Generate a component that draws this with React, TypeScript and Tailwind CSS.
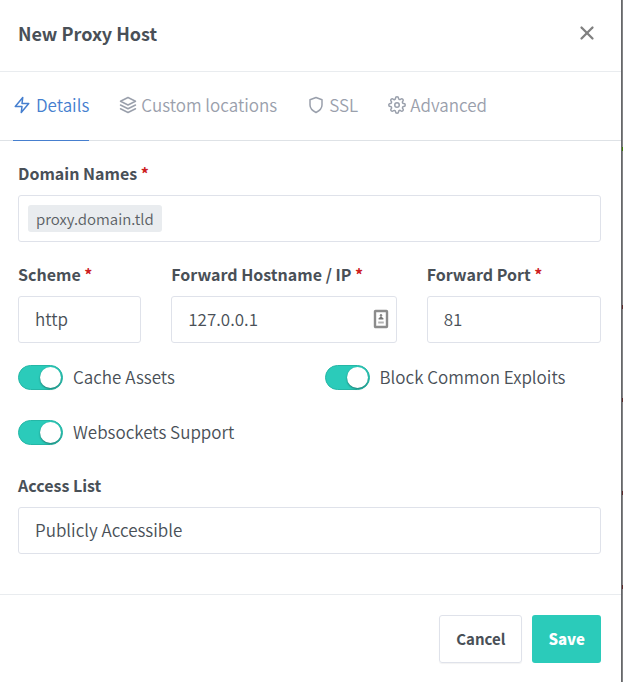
import type { ReactNode } from "react";
import { FiLayers, FiSettings, FiShield, FiX, FiZap } from "react-icons/fi";

const field =
  "block h-[47px] w-full appearance-none rounded-[3px] border border-[#dfe2ea] bg-white px-4 pb-0.5 text-[17px] leading-6 font-[350] text-[#495057] outline-none focus:border-[#467fcf]";

function Label({ htmlFor, required, children }: { htmlFor: string; required?: boolean; children: ReactNode }) {
  return (
    <label htmlFor={htmlFor} className="mb-[10px] block text-[16px] leading-6 font-semibold whitespace-nowrap">
      {children}
      {required && <span className="text-[#cd201f]"> *</span>}
    </label>
  );
}

function Toggle({ label }: { label: string }) {
  return (
    <label className="flex items-center gap-[10px] text-[17px] leading-[23px] font-[350]">
      <input
        type="checkbox"
        defaultChecked
        className="flex h-[25px] w-[45px] shrink-0 appearance-none items-center rounded-full border border-[#25b7a6] bg-[#2bcbba] px-px before:size-[21px] before:rounded-full before:bg-white before:shadow-[0_1px_2px_rgba(0,0,0,0.4)] checked:justify-end"
      />
      <span className="pb-0.5">{label}</span>
    </label>
  );
}

const tabs = [
  { name: "Details", icon: FiZap, active: true },
  { name: "Custom locations", icon: FiLayers },
  { name: "SSL", icon: FiShield },
  { name: "Advanced", icon: FiSettings },
];

export default function App() {
  return (
    <div className="flex min-h-screen bg-[#828385] font-['Noto_Sans_CJK_SC','Noto_Sans',sans-serif] text-[#495057]">
      <form className="flex min-w-0 flex-1 flex-col bg-white" onSubmit={(e) => e.preventDefault()}>
        <header className="flex h-[72px] items-center justify-between border-b border-[#e9ecef] px-[18px] pb-1.5">
          <h1 className="text-[18px] leading-6 font-semibold">New Proxy Host</h1>
          <button type="button" aria-label="Close" className="px-[5px] text-[#808080]">
            <FiX size={22} strokeWidth={2.5} />
          </button>
        </header>

        <nav className="flex h-[69px] gap-[30px] border-b border-[#dee2e6] px-[13px]">
          {tabs.map(({ name, icon: Icon, active }) => (
            <a
              key={name}
              href="#"
              className={
                active
                  ? "-mb-px flex items-center gap-[5px] border-b border-[#467fcf] pb-0.5 text-[17px] font-[350] whitespace-nowrap text-[#467fcf]"
                  : "-mb-px flex items-center gap-1 border-b border-transparent pb-0.5 text-[17px] font-[350] whitespace-nowrap text-[#9aa0ac]"
              }
            >
              <Icon size={18} />
              {name}
            </a>
          ))}
        </nav>

        <div className="flex-1 px-[18px] pt-5 pr-5 pb-10">
          <Label htmlFor="domains" required>
            Domain Names
          </Label>
          <div className="flex h-[47px] items-center rounded-[3px] border border-[#dfe2ea] px-[9px]">
            <span className="rounded-[3px] bg-[#e9ecef] px-2 text-[15px] leading-[27px] font-[350] text-[#5a5f64]">
              proxy.domain.tld
            </span>
            <input id="domains" className="min-w-0 flex-1 outline-none" />
          </div>

          <div className="mt-5 grid grid-cols-12 gap-x-[30px]">
            <div className="col-span-3">
              <Label htmlFor="scheme" required>
                Scheme
              </Label>
              <select id="scheme" className={field}>
                <option>http</option>
                <option>https</option>
              </select>
            </div>
            <div className="col-span-5">
              <Label htmlFor="host" required>
                Forward Hostname / IP
              </Label>
              <div className="relative">
                <input id="host" defaultValue="127.0.0.1" className={field} />
                <svg viewBox="0 0 16 20" className="absolute top-[13px] right-2 h-5 w-4" aria-hidden="true">
                  <rect x="2" y="2" width="12" height="16" rx="0.5" fill="#fff" stroke="#8c8c8c" strokeWidth="2.4" />
                  <circle cx="8" cy="6.3" r="1.2" fill="#888" />
                  <path d="M8 7l2.4 2.4v1.2H5.6V9.4z" fill="#777" />
                  <path d="M5.2 12.5h5.6v2H5.2z" fill="#b3b3b3" />
                </svg>
              </div>
            </div>
            <div className="col-span-4">
              <Label htmlFor="port" required>
                Forward Port
              </Label>
              <input id="port" defaultValue="81" className={field} />
            </div>
          </div>

          <div className="mt-[22px] grid grid-cols-2 gap-x-[30px] gap-y-[30px]">
            <Toggle label="Cache Assets" />
            <Toggle label="Block Common Exploits" />
            <Toggle label="Websockets Support" />
          </div>

          <div className="mt-7">
            <Label htmlFor="access">Access List</Label>
            <select id="access" className={field}>
              <option>Publicly Accessible</option>
            </select>
          </div>
        </div>

        <footer className="flex justify-end gap-[10px] border-t border-[#e9ecef] px-5 pt-5 pb-[19px] text-[15px] font-bold">
          <button type="button" className="h-12 rounded-[3px] border border-[#dfe2ea] px-4 shadow-[0_1px_1px_rgba(0,0,0,0.05)]">
            Cancel
          </button>
          <button type="submit" className="h-12 rounded-[3px] bg-[#2bcbba] px-4 font-black text-white">
            Save
          </button>
        </footer>
      </form>
      <div className="w-0.5 border-l border-[#66676a] pt-[147px]">
        <div className="h-1 bg-[#3a7d00]" />
        <div className="mt-[154px] h-1 bg-[#5c2b2b]" />
        <div className="mt-[89px] h-1 bg-[#5c2b2b]" />
        <div className="mt-[89px] h-1 bg-[#5c2b2b]" />
        <div className="mt-[90px] h-1 bg-[#5c2b2b]" />
      </div>
    </div>
  );
}
